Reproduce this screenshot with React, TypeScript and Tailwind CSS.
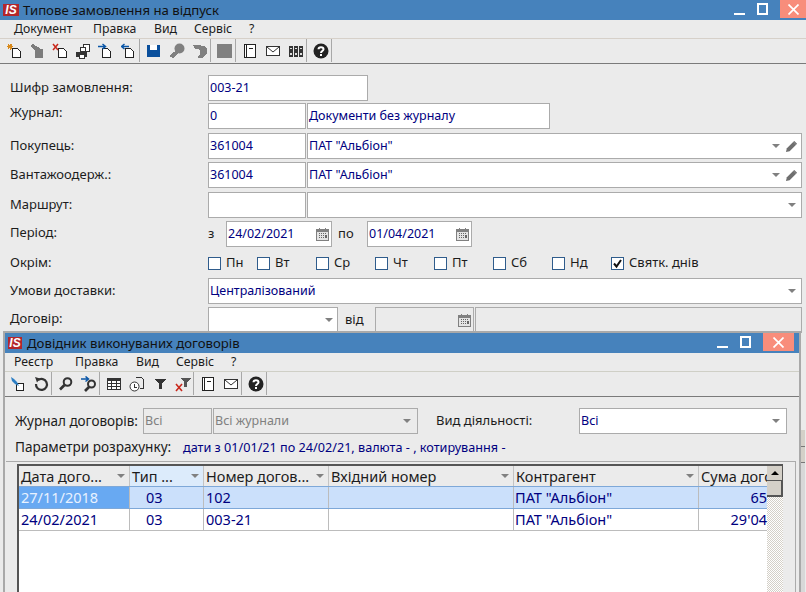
import type { ReactNode } from "react";

const DOC = "M6.500 5.500h5l2.500 2.500v6.500h-7.500z";
const DOC_LEFT = "M4.500 5.500h5l2.500 2.500v6.500H4.500z";

function Ico({ children }: { children: ReactNode }) {
  return (
    <svg viewBox="0 0 16 16" className="h-4 w-4" shapeRendering="crispEdges" fill="none">
      {children}
    </svg>
  );
}

const icons: Record<string, ReactNode> = {
  newDoc: (
    <Ico>
      <path d={DOC} stroke="#222" fill="#fff" />
      <path d="M1 3.500h6M4 .5v6M2 1.500l4 4M6 1.500l-4 4" stroke="#d98a1c" />
    </Ico>
  ),
  editGray: (
    <Ico>
      <path d="M1 3l3-2 5 3 2 2h3v9H6V8L4 6z" fill="#7c7c7c" />
    </Ico>
  ),
  delDoc: (
    <Ico>
      <path d={DOC} stroke="#222" fill="#fff" />
      <path d="M1 1l5 6M6 1L1 7" stroke="#c9281c" strokeWidth="1.500" shapeRendering="auto" />
    </Ico>
  ),
  print: (
    <Ico>
      <path d="M8.500 1.500h6v7h-6z" stroke="#333" fill="#fff" />
      <path d="M5.500 4.500h5v4h-5z" stroke="#333" fill="#fff" />
      <path d="M1 9h11v5H1z" fill="#333" />
      <path d="M4 11h5v4H4z" fill="#fff" stroke="#333" />
    </Ico>
  ),
  docIn: (
    <Ico>
      <path d={DOC_LEFT} stroke="#222" fill="#fff" />
      <path d="M0 3.500h7M4.500 1l3 2.500-3 2.500" stroke="#0b57a8" strokeWidth="1.500" shapeRendering="auto" />
    </Ico>
  ),
  docOut: (
    <Ico>
      <path d={DOC_LEFT} stroke="#222" fill="#fff" />
      <path d="M8 3.500H1M3.500 1L.5 3.500l3 2.500" stroke="#0b57a8" strokeWidth="1.500" shapeRendering="auto" />
    </Ico>
  ),
  save: (
    <Ico>
      <path d="M1 2h13v12H1z" fill="#0a4f9c" />
      <path d="M4 2h7v5H4z" fill="#fff" />
      <path d="M5 11h5v3H5z" fill="#0a4f9c" />
    </Ico>
  ),
  keyGray: (
    <Ico>
      <circle cx="10.500" cy="5.500" r="5" fill="#808080" shapeRendering="auto" />
      <path d="M8 7l2 2-6 6-3-1v-2z" fill="#808080" />
    </Ico>
  ),
  key2Gray: (
    <Ico>
      <path d="M1 2h7l2 1h2l3 3v4l-3 3-2 2H6v-2l2-2V8L6 6H3z" fill="#808080" />
    </Ico>
  ),
  square: (
    <Ico>
      <path d="M0 1h15v14H0z" fill="#808080" />
    </Ico>
  ),
  note: (
    <Ico>
      <path d="M2.500 1.500h11v13h-11z" stroke="#222" fill="#fff" />
      <path d="M4.500 1v14" stroke="#222" />
      <path d="M7 5h4" stroke="#222" />
    </Ico>
  ),
  mail: (
    <Ico>
      <path d="M1.500 3.500h13v9h-13z" stroke="#333" fill="#fff" />
      <path d="M2 4l6 5 6-5" stroke="#333" shapeRendering="auto" />
    </Ico>
  ),
  books: (
    <Ico>
      <path d="M1 3h4v11H1zM6 3h4v11H6zM11 3h4v11h-4z" fill="#333" />
      <path d="M2 5h2v1H2zM7 5h2v1H7zM12 5h2v1h-2zM2 10h2v2H2zM7 10h2v2H7zM12 10h2v2h-2z" fill="#ddd" />
    </Ico>
  ),
  help: (
    <Ico>
      <circle cx="8" cy="8" r="7.500" fill="#222" shapeRendering="auto" />
      <path d="M5.500 6.200C5.500 3.500 10.500 3.500 10.500 6.200 10.500 8 8 8 8 10" stroke="#fff" strokeWidth="2" shapeRendering="auto" />
      <path d="M7 11h2v2H7z" fill="#fff" />
    </Ico>
  ),
  pin: (
    <Ico>
      <path d="M6.500 7.500h7v7h-7z" stroke="#222" fill="#fff" />
      <path d="M1 1l3 2 3 3 2 4-4-2-3-3z" fill="#2d7fc4" shapeRendering="auto" />
    </Ico>
  ),
  refresh: (
    <Ico>
      <path d="M5 4.200A5.500 5.500 0 1 1 3 8" stroke="#333" strokeWidth="2.200" shapeRendering="auto" />
      <path d="M2 1l5 1.500-3 4z" fill="#333" shapeRendering="auto" />
    </Ico>
  ),
  search: (
    <Ico>
      <circle cx="9.500" cy="6" r="3.800" stroke="#333" strokeWidth="2" shapeRendering="auto" />
      <path d="M6.500 9L2 13.500" stroke="#333" strokeWidth="2.600" shapeRendering="auto" />
    </Ico>
  ),
  searchIn: (
    <Ico>
      <circle cx="10.500" cy="8" r="3.500" stroke="#333" strokeWidth="2" shapeRendering="auto" />
      <path d="M8 11l-4 4" stroke="#333" strokeWidth="2.600" shapeRendering="auto" />
      <path d="M0 3h7M4.500 .5l3 2.500-3 2.500" stroke="#0b57a8" strokeWidth="1.500" shapeRendering="auto" />
    </Ico>
  ),
  table: (
    <Ico>
      <path d="M1.500 2.500h13v11h-13z" stroke="#333" fill="#fff" />
      <path d="M1 3h14v2H1z" fill="#333" />
      <path d="M5.500 3v10M10.500 3v10M2 7.500h12M2 10.500h12" stroke="#333" />
    </Ico>
  ),
  clockDoc: (
    <Ico>
      <path d="M6.500 1.500h6l2 2v9h-4" stroke="#333" />
      <circle cx="5.500" cy="10.500" r="4.500" stroke="#333" fill="#fff" shapeRendering="auto" />
      <path d="M5.500 8v3h2.500" stroke="#333" />
    </Ico>
  ),
  filter: (
    <Ico>
      <path d="M3 3h11L10 8v5H7V8z" fill="#333" />
    </Ico>
  ),
  filterX: (
    <Ico>
      <path d="M6 2h10l-4 4v5H9V6z" fill="#555" />
      <path d="M1 8l6 7M7 8l-6 7" stroke="#c9281c" strokeWidth="1.600" shapeRendering="auto" />
    </Ico>
  ),
};

function Tool({ name }: { name: string }) {
  return <div className="flex h-[23px] w-[23px] items-center justify-center">{icons[name]}</div>;
}

function Sep() {
  return <div className="ml-[-1px] mr-[2px] h-[23px] w-px bg-[#a8a8a8]" />;
}

function Toolbar({ groups, className }: { groups: string[][]; className: string }) {
  return (
    <div className={`flex h-[23px] items-center ${className}`}>
      {groups.map((g, i) => (
        <div key={i} className="flex items-center">
          {g.map((n) => (
            <Tool key={n} name={n} />
          ))}
          <Sep />
        </div>
      ))}
    </div>
  );
}

function Menu({ items }: { items: [string, string][] }) {
  return (
    <div className="flex h-[18px] items-center pl-[14px] text-[12.25px] text-[#1c1c1c]">
      {items.map(([t, w]) => (
        <span key={t} className={w}>
          {t}
        </span>
      ))}
    </div>
  );
}

function Logo({ className }: { className: string }) {
  return (
    <div className={`flex items-center justify-center bg-[#b3262b] font-['Liberation_Sans',sans-serif] text-[12px] font-bold italic leading-none text-white ${className}`}>
      IS
    </div>
  );
}

function Arrow() {
  return <div className="h-0 w-0 border-x-[4px] border-t-[4px] border-x-transparent border-t-[#808080]" />;
}

function Pencil() {
  return (
    <svg viewBox="0 0 14 14" className="h-[13px] w-[13px]">
      <path d="M1 13l1-4 7-7 3 3-7 7z" fill="#6f6f6f" />
      <path d="M10 1l3 3-1 1-3-3z" fill="#6f6f6f" />
    </svg>
  );
}

function Calendar() {
  return (
    <svg viewBox="0 0 13 13" className="h-[13px] w-[13px]" shapeRendering="crispEdges">
      <path d="M0 1h13v12H0z" fill="#808080" />
      <path d="M1 4h11v8H1z" fill="#e4e4e4" />
      <path d="M3 0h1v3H3zM9 0h1v3H9z" fill="#808080" />
      <path d="M3 5h1v1H3zM5 5h1v1H5zM7 5h1v1H7zM9 5h1v1H9zM3 7h1v1H3zM5 7h1v1H5zM7 7h1v1H7zM3 9h1v1H3zM5 9h1v1H5zM7 9h1v1H7zM9 7h2v3H9z" fill="#666" />
    </svg>
  );
}

function Field({
  w,
  value,
  gray,
  muted,
  children,
  className = "",
}: {
  w: string;
  value?: string;
  gray?: boolean;
  muted?: boolean;
  children?: ReactNode;
  className?: string;
}) {
  return (
    <div
      className={`flex h-[26px] items-center border border-[#ababab] pl-[1px] text-[12.5px] ${w} ${
        gray ? "bg-[#ebebeb]" : "bg-white"
      } ${muted ? "text-[#808080]" : "text-[#000080]"} ${className}`}
    >
      <span className="grow whitespace-nowrap">{value}</span>
      {children}
    </div>
  );
}

function Label({ children, w = "w-[198px]", className = "text-[13px]" }: { children: ReactNode; w?: string; className?: string }) {
  return <div className={`${w} shrink-0 whitespace-nowrap text-[#1c1c1c] ${className}`}>{children}</div>;
}

function Check({ label, w, on }: { label: string; w: string; on?: boolean }) {
  return (
    <div className={`flex items-center ${w}`}>
      <div className="flex h-[13px] w-[13px] items-center justify-center border border-[#2f5c8c] bg-white">
        {on && (
          <svg viewBox="0 0 11 11" className="h-[11px] w-[11px]">
            <path d="M2 5.500l2.500 3L9 2" stroke="#111" strokeWidth="2" fill="none" />
          </svg>
        )}
      </div>
      <span className="ml-[5px] text-[13px] text-[#1c1c1c]">{label}</span>
    </div>
  );
}

function Controls({ className, close }: { className: string; close: string }) {
  return (
    <div className={`flex items-start ${className}`}>
      <div className="mt-[13px] h-[2px] w-[11px] bg-white" />
      <div className="ml-[12px] mt-[3px] h-[12px] w-[11px] border-2 border-white" />
      <div className={`ml-[12px] flex h-[18px] items-center justify-center bg-[#f88d7b] ${close}`}>
        <svg viewBox="0 0 11 11" className="h-[11px] w-[11px]">
          <path d="M.5.500l10 10M10.500.500l-10 10" stroke="#fff" strokeWidth="1.700" />
        </svg>
      </div>
    </div>
  );
}

const columns = "grid grid-cols-[111px_74px_125px_185px_185px_68px]";

function Head({ text, active }: { text: string; active?: boolean }) {
  return (
    <div className={`flex items-center overflow-hidden border-r border-[#c4c4c4] pl-[2px] pr-[4px] ${active ? "bg-[#dcebfb]" : ""}`}>
      <span className="grow whitespace-nowrap">{text}</span>
      <Arrow />
    </div>
  );
}

function Cell({ children, className = "" }: { children?: ReactNode; className?: string }) {
  return <div className={`overflow-hidden whitespace-nowrap border-r border-[#bcbcbc] ${className}`}>{children}</div>;
}

export default function App() {
  return (
    <div className="relative h-[592px] w-[806px] overflow-hidden bg-[#ebebeb] font-['Noto_Sans',sans-serif]">
      {/* main window */}
      <div className="flex h-[20px] items-start justify-between bg-[#4682bc]">
        <div className="flex h-[20px] items-center pl-[3px]">
          <Logo className="h-[12px] w-[16px]" />
          <span className="ml-[4px] text-[13.2px] leading-[16px] text-[#111]">Типове замовлення на відпуск</span>
        </div>
        <Controls className="pr-0" close="w-[26px]" />
      </div>
      <Menu
        items={[
          ["Документ", "w-[79px]"],
          ["Правка", "w-[61px]"],
          ["Вид", "w-[40px]"],
          ["Сервіс", "w-[55px]"],
          ["?", "w-[20px]"],
        ]}
      />
      <div className="h-px bg-[#d6d0c9]" />
      <Toolbar
        className="pl-[2px]"
        groups={[
          ["newDoc", "editGray", "delDoc", "print", "docIn", "docOut"],
          ["save", "keyGray", "key2Gray"],
          ["square"],
          ["note", "mail", "books"],
          ["help"],
        ]}
      />
      <div className="mt-px h-px bg-[#7a7a7a]" />

      <div className="pl-[10px] pr-[4px] pt-[11px]">
        <div className="flex items-center">
          <Label>Шифр замовлення:</Label>
          <Field w="w-[160px]" value="003-21" />
        </div>
        <div className="mt-[2px] flex items-center">
          <Label>
            <span className="relative top-[-3px]">Журнал:</span>
          </Label>
          <Field w="w-[98px]" value="0" />
          <Field w="w-[243px]" value="Документи без журналу" className="ml-px" />
        </div>
        <div className="mt-[4px] flex items-center">
          <Label>Покупець:</Label>
          <Field w="w-[98px]" value="361004" />
          <Field w="w-[495px]" value="ПАТ &quot;Альбіон&quot;" className="ml-px pr-[3px]">
            <Arrow />
            <div className="ml-[5px]">
              <Pencil />
            </div>
          </Field>
        </div>
        <div className="mt-[3px] flex items-center">
          <Label>Вантажоодерж.:</Label>
          <Field w="w-[98px]" value="361004" />
          <Field w="w-[495px]" value="ПАТ &quot;Альбіон&quot;" className="ml-px pr-[3px]">
            <Arrow />
            <div className="ml-[5px]">
              <Pencil />
            </div>
          </Field>
        </div>
        <div className="mt-[4px] flex items-center">
          <Label>Маршрут:</Label>
          <Field w="w-[98px]" />
          <Field w="w-[495px]" className="ml-px pr-[5px]">
            <Arrow />
          </Field>
        </div>
        <div className="mt-[3px] flex items-center">
          <Label>
            <span className="relative top-[-1px]">Період:</span>
          </Label>
          <span className="w-[18px] text-[13px] text-[#1c1c1c]">з</span>
          <Field w="w-[106px]" value="24/02/2021" className="pr-[2px]">
            <Calendar />
          </Field>
          <span className="w-[35px] pl-[6px] text-[13px] text-[#1c1c1c]">по</span>
          <Field w="w-[105px]" value="01/04/2021" className="pr-[2px]">
            <Calendar />
          </Field>
        </div>
        <div className="flex h-[31px] items-center pt-[1px]">
          <Label>Окрім:</Label>
          <Check label="Пн" w="w-[49px]" />
          <Check label="Вт" w="w-[59px]" />
          <Check label="Ср" w="w-[59px]" />
          <Check label="Чт" w="w-[59px]" />
          <Check label="Пт" w="w-[59px]" />
          <Check label="Сб" w="w-[59px]" />
          <Check label="Нд" w="w-[59px]" />
          <Check label="Святк. днів" w="w-[100px]" on />
        </div>
        <div className="flex items-center">
          <Label>Умови доставки:</Label>
          <Field w="w-[594px]" value="Централізований" className="pr-[5px]">
            <Arrow />
          </Field>
        </div>
        <div className="mt-[3px] flex items-center">
          <Label>
            <span className="relative top-[-1px]">Договір:</span>
          </Label>
          <Field w="w-[130px]" className="pr-[4px]">
            <Arrow />
          </Field>
          <span className="w-[37px] pl-[7px] text-[13px] text-[#1c1c1c]">від</span>
          <Field w="w-[99px]" gray className="pr-[2px]">
            <Calendar />
          </Field>
          <Field w="w-[327px]" gray className="ml-px" />
        </div>
      </div>

      {/* main window's own scrollbar, behind the dialog */}
      <div className="absolute bottom-0 left-[801px] top-[430px] flex w-[4px] flex-col bg-[#d8d8d8]">
        <div className="h-[17px] border-b border-[#777] bg-[#d4d0c8]" />
        <div className="h-[16px] border-b border-[#777] bg-[#d4d0c8]" />
      </div>

      {/* dialog window */}
      <div className="absolute bottom-0 left-[3px] top-[331px] flex w-[798px] flex-col border-x-2 border-t-2 border-[#a9a9a9] bg-[#ebebeb]">
        <div className="flex h-[20px] shrink-0 items-start justify-between bg-[#4682bc]">
          <div className="flex h-[20px] items-center pl-[3px]">
            <Logo className="h-[12px] w-[14px]" />
            <span className="ml-[5px] text-[13.2px] leading-[16px] text-[#111]">Довідник виконуваних договорів</span>
          </div>
          <Controls className="pr-[5px]" close="w-[31px]" />
        </div>
        <Menu
          items={[
            ["Реєстр", "w-[61px] -ml-[5px]"],
            ["Правка", "w-[61px]"],
            ["Вид", "w-[40px]"],
            ["Сервіс", "w-[55px]"],
            ["?", "w-[20px]"],
          ]}
        />
        <div className="h-px bg-[#cfcfc6]" />
        <Toolbar
          className="pl-[1px]"
          groups={[
            ["pin", "refresh"],
            ["search", "searchIn"],
            ["table", "clockDoc", "filter", "filterX"],
            ["note", "mail"],
            ["help"],
          ]}
        />
        <div className="mt-px h-px bg-[#7a7a7a]" />

        <div className="mt-[11px] flex items-center pl-[10px]">
          <Label w="w-[128px]" className="text-[13.5px]">Журнал договорів:</Label>
          <Field w="w-[69px]" value="Всі" gray muted />
          <Field w="w-[205px]" value="Всі журнали" gray muted className="ml-px pr-[6px]">
            <Arrow />
          </Field>
          <Label w="w-[143px] ml-[18px]">Вид діяльності:</Label>
          <Field w="w-[208px]" value="Всі" className="pr-[6px]">
            <Arrow />
          </Field>
        </div>
        <div className="mt-[4px] flex h-[18px] items-center pl-[10px]">
          <Label w="w-[168px]" className="text-[13.6px]">Параметри розрахунку:</Label>
          <span className="text-[12.65px] text-[#000080]">дати з 01/01/21 по 24/02/21, валюта - , котирування -</span>
        </div>

        {/* grid group */}
        <div className="ml-[1px] mr-[3px] mt-[5px] min-h-0 grow border-r border-t border-[#ababab] pl-[11px] pr-[12px] pt-[2px]">
          <div className="flex h-full border-l-2 border-t-2 border-[#555]">
            <div className="min-w-0 grow overflow-hidden bg-white text-[14.5px]">
              <div className={`${columns} h-[20px] bg-[#ebebeb] leading-[20px] text-[#1c1c1c]`}>
                <Head text="Дата дого..." />
                <Head text="Тип ..." active />
                <Head text="Номер догов..." />
                <Head text="Вхідний номер" />
                <Head text="Контрагент" />
                <div className="overflow-hidden whitespace-nowrap pl-[2px]">Сума договору</div>
              </div>
              <div className={`${columns} h-[23px] items-stretch border-y border-[#7ea8d8] bg-[#cbe0fb] leading-[21px] text-[#000080]`}>
                <Cell className="bg-[#68a9f2] pl-[2px] text-[#e8f2ff]">27/11/2018</Cell>
                <Cell className="pl-[16px]">03</Cell>
                <Cell className="pl-[2px]">102</Cell>
                <Cell />
                <Cell className="pl-[1px]">ПАТ &quot;Альбіон&quot;</Cell>
                <div className="overflow-hidden text-right">65</div>
              </div>
              <div className={`${columns} h-[22px] items-stretch border-b border-[#bcbcbc] leading-[21px] text-[#000080]`}>
                <Cell className="pl-[2px]">24/02/2021</Cell>
                <Cell className="pl-[16px]">03</Cell>
                <Cell className="pl-[2px]">003-21</Cell>
                <Cell />
                <Cell className="pl-[1px]">ПАТ &quot;Альбіон&quot;</Cell>
                <div className="overflow-hidden text-right">29&apos;04</div>
              </div>
            </div>
            {/* grid scrollbar */}
            <div className="flex w-[16px] shrink-0 flex-col bg-[repeating-conic-gradient(#d4d0c8_0_25%,#fff_0_50%)] bg-[length:2px_2px]">
              <div className="flex h-[15px] items-center justify-center border-b border-r border-[#555] bg-[#d4d0c8]">
                <div className="h-0 w-0 border-x-[4px] border-b-[4px] border-x-transparent border-b-black" />
              </div>
              <div className="h-[16px] border-b-2 border-r-2 border-[#555] bg-[#d4d0c8]" />
            </div>
          </div>
        </div>
      </div>
    </div>
  );
}
